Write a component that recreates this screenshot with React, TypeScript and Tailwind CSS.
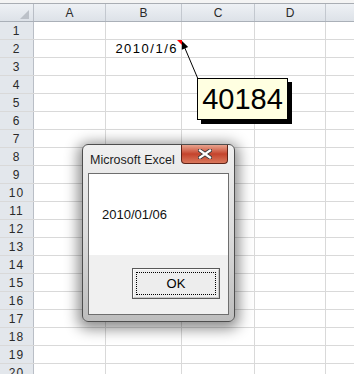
import React from "react";

const cols = [
  { label: "A", w: "w-[72px]" },
  { label: "B", w: "w-[76px]" },
  { label: "C", w: "w-[73px]" },
  { label: "D", w: "w-[71px]" },
];

const rows = Array.from({ length: 20 }, (_, i) => i + 1);

function HeaderRow() {
  return (
    <div className="flex h-[18px] border-b border-[#aab0b8] bg-gradient-to-b from-[#eef1f5] to-[#dde2e8]">
      <div className="w-[34px] shrink-0 border-r border-[#b9bec6] flex items-end justify-end pr-[4px] pb-[2px]">
        <div className="w-0 h-0 border-l-[9px] border-l-transparent border-b-[9px] border-b-[#bcc1c8]" />
      </div>
      {cols.map((c) => (
        <div
          key={c.label}
          className={`${c.w} shrink-0 border-r border-[#c3c8cf] flex items-center justify-center text-[12px] text-[#2a2a2a]`}
        >
          {c.label}
        </div>
      ))}
      <div className="flex-1" />
    </div>
  );
}

function Row({ n }: { n: number }) {
  return (
    <div className="flex h-[18px] border-b border-[#d9d9d9]">
      <div className="w-[34px] shrink-0 border-r border-[#b9bec6] bg-[#e3e7ec] flex items-center justify-center text-[12px] tracking-[1px] text-[#2a2a2a]">
        {n}
      </div>
      {cols.map((c) => (
        <div
          key={c.label}
          className={`${c.w} shrink-0 border-r border-[#d9d9d9] flex items-center justify-end pr-[3px] text-[13px] tracking-[1.5px] text-black`}
        >
          {n === 2 && c.label === "B" ? "2010/1/6" : null}
        </div>
      ))}
      <div className="flex-1" />
    </div>
  );
}

function CloseButton() {
  return (
    <div className="w-[47px] h-[19px] rounded-b-[4px] border border-t-0 border-[#5e2318] bg-gradient-to-b from-[#e8a38f] via-[#c4432c] to-[#d9775c] flex items-center justify-center">
      <svg width="14" height="10" viewBox="0 0 14 10">
        <path d="M2 1.5 L12 8.5 M12 1.5 L2 8.5" stroke="#3a3a3a" strokeWidth="4" strokeLinecap="square" />
        <path d="M2 1.5 L12 8.5 M12 1.5 L2 8.5" stroke="#ffffff" strokeWidth="2.2" strokeLinecap="square" />
      </svg>
    </div>
  );
}

function Dialog() {
  return (
    <div className="absolute left-[82px] top-[144px] w-[153px] h-[178px] rounded-[6px] border border-[#4e4e4e] bg-gradient-to-b from-[#f0f0f0] via-[#dcdcdc] to-[#bdbdbd] shadow-[0_3px_14px_4px_rgba(0,0,0,0.45)] flex flex-col px-[5px] pb-[6px]">
      {/* title bar */}
      <div className="h-[28px] flex items-start justify-between pl-[2px] pr-[1px]">
        <span className="pt-[6px] text-[12.5px] text-[#1e1e1e]">Microsoft Excel</span>
        <CloseButton />
      </div>
      {/* client area */}
      <div className="flex-1 border border-[#6e6e6e] flex flex-col">
        <div className="h-[81px] bg-white pl-[13px] pt-[31px] text-[13px] text-[#111]">
          2010/01/06
        </div>
        <div className="flex-1 bg-[#f0f0f0] flex justify-end items-start pt-[13px] pr-[8px]">
          <div className="w-[88px] h-[31px] border border-[#5a5a5a] bg-[#ededed] flex">
            <div className="flex-1 border border-[#fbfbfb] border-r-[#c9c9c9] border-b-[#c9c9c9] p-[2px] flex">
              <div className="flex-1 border border-dotted border-black flex items-center justify-center text-[13px] text-black">
                OK
              </div>
            </div>
          </div>
        </div>
      </div>
    </div>
  );
}

export default function App() {
  return (
    <div className="relative w-[354px] h-[374px] overflow-hidden bg-white font-['Liberation_Sans',Arial,sans-serif]">
      <div className="h-[4px] bg-[#f4f4f4] border-b border-[#a9adb3]" />
      <HeaderRow />
      {rows.map((n) => (
        <Row key={n} n={n} />
      ))}

      {/* comment arrow + indicator */}
      <svg className="absolute left-0 top-0" width="354" height="374">
        <polygon points="177,40 182,40 182,45" fill="#ff0000" />
        <line x1="184" y1="46" x2="198" y2="79" stroke="#000" strokeWidth="1" />
        <polygon points="182,41 188.2,47 181.8,49.7" fill="#000" />
      </svg>

      {/* comment box */}
      <div className="absolute left-[197px] top-[78px] w-[91px] h-[42px] border border-black bg-[#ffffe1] shadow-[4px_4px_0_#000] flex items-center justify-center text-[29px] leading-none text-black">
        40184
      </div>

      <Dialog />
    </div>
  );
}
